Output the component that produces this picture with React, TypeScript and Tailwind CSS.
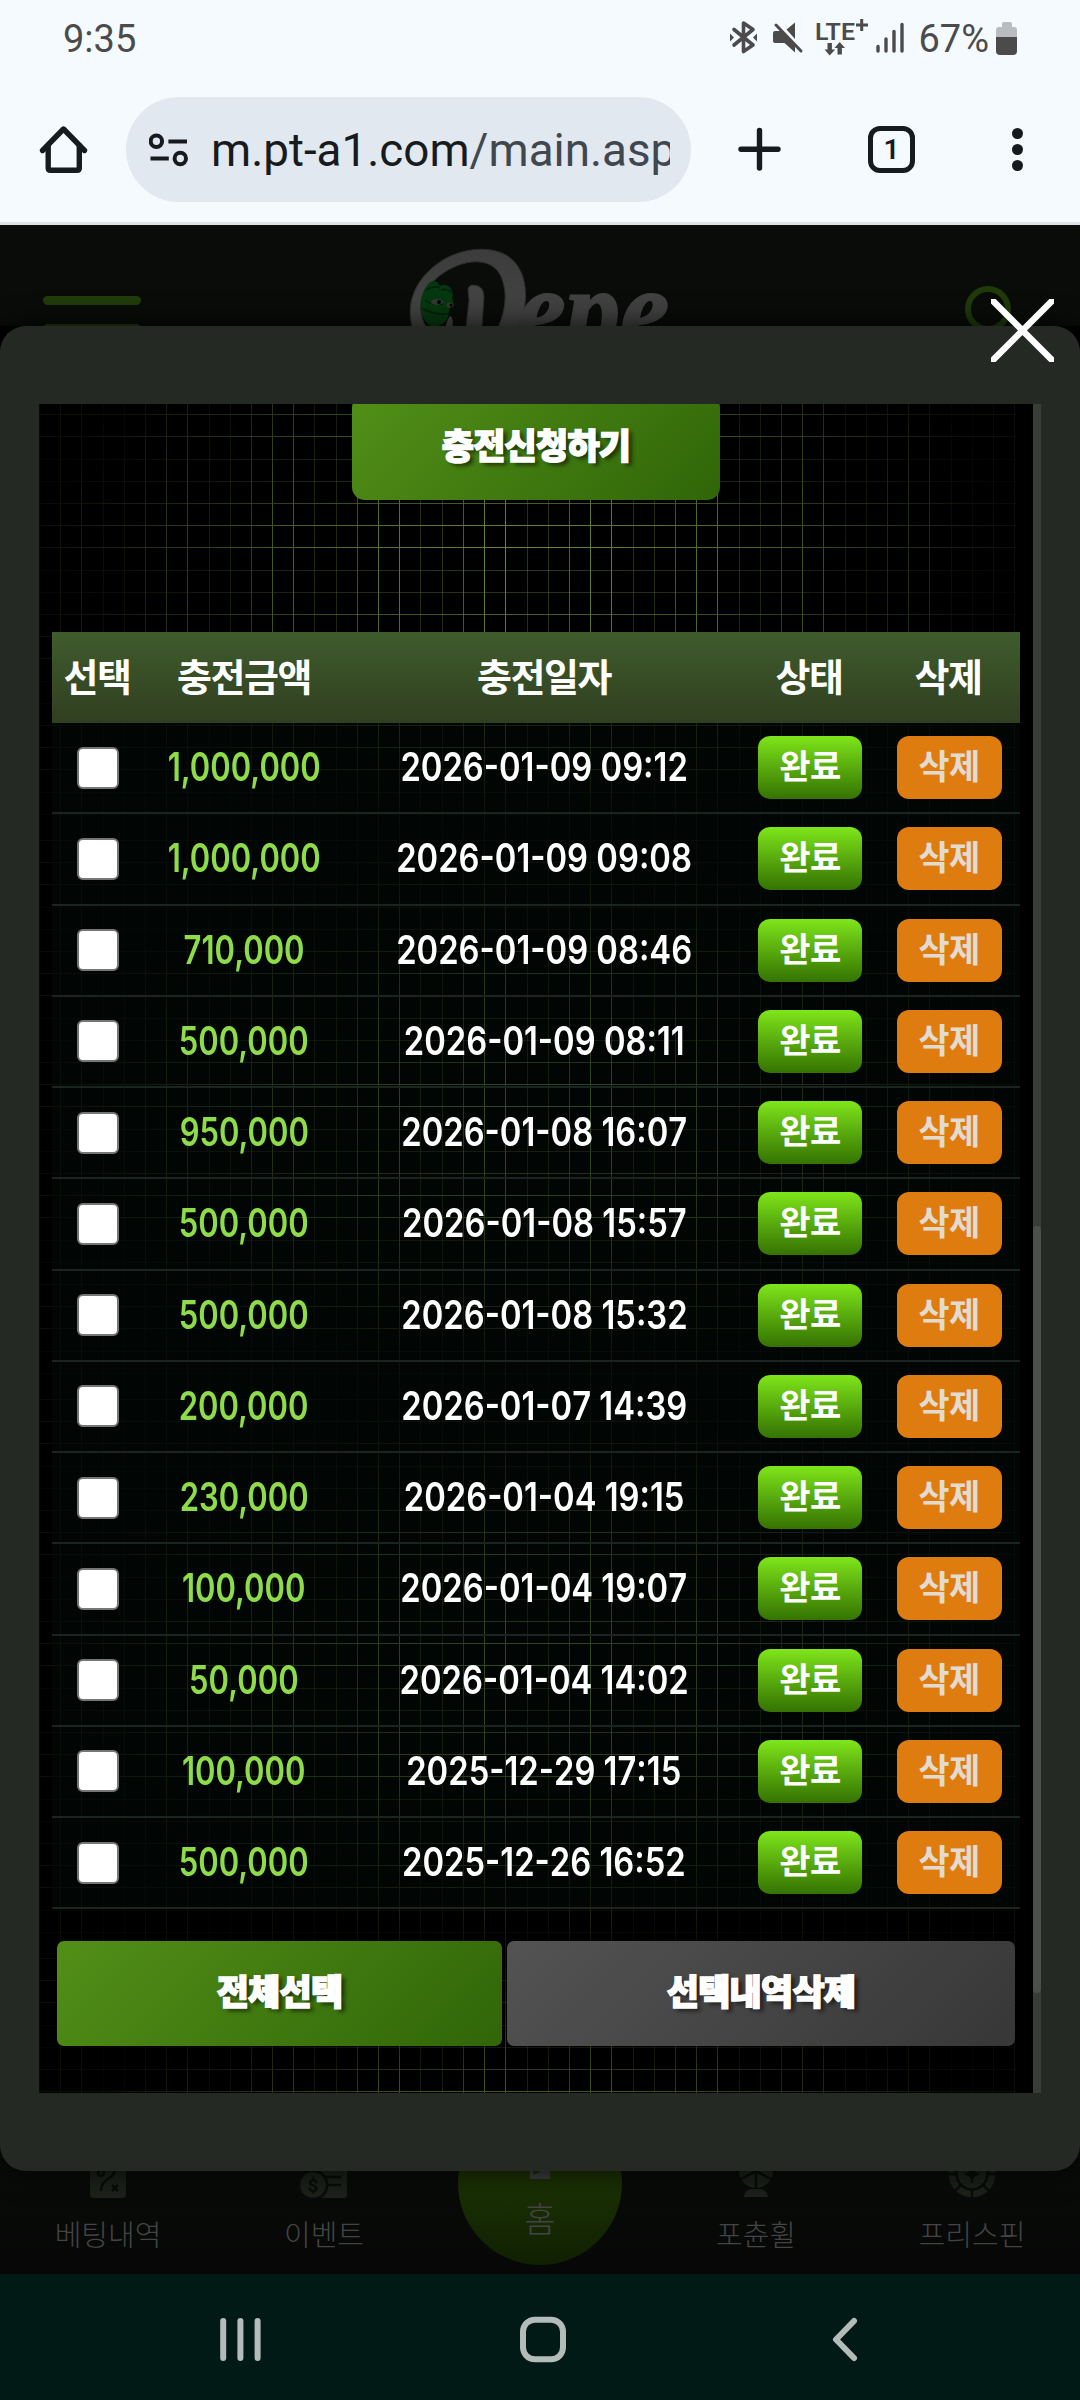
import type { ReactNode } from 'react'
import { clsx } from 'clsx'

interface Deposit {
  amount: string
  date: string
}

const deposits: Deposit[] = [
  { amount: '1,000,000', date: '2026-01-09 09:12' },
  { amount: '1,000,000', date: '2026-01-09 09:08' },
  { amount: '710,000', date: '2026-01-09 08:46' },
  { amount: '500,000', date: '2026-01-09 08:11' },
  { amount: '950,000', date: '2026-01-08 16:07' },
  { amount: '500,000', date: '2026-01-08 15:57' },
  { amount: '500,000', date: '2026-01-08 15:32' },
  { amount: '200,000', date: '2026-01-07 14:39' },
  { amount: '230,000', date: '2026-01-04 19:15' },
  { amount: '100,000', date: '2026-01-04 19:07' },
  { amount: '50,000', date: '2026-01-04 14:02' },
  { amount: '100,000', date: '2025-12-29 17:15' },
  { amount: '500,000', date: '2025-12-26 16:52' },
]

function StatusBar() {
  return (
    <div className="flex h-[74px] items-center justify-between pl-[63px] pr-[62px] pt-[3px] text-[38px] leading-none text-[#4b4b4b]">
      <span>9:35</span>
      <div className="flex items-center">
        <svg width="264" height="44" viewBox="728 17 264 44" className="-mr-[75px]" fill="none">
          {/* bluetooth */}
          <path d="M733 29.5 752 45 742.5 51.5V23L752 29.5 733 45" stroke="#4b4b4b" strokeWidth="3.6" strokeLinejoin="round" strokeLinecap="round" />
          <path d="m729 33.5 4 4-4 4zM756 33.5l-4 4 4 4z" fill="#4b4b4b" />
          {/* muted speaker */}
          <path d="M774 31h6l14 15v6.5l-10.5-9.5H774q-2 0-2-2v-8q0-2 2-2zM794 22.5V39l-8.5-9.5z" fill="#4b4b4b" />
          <path d="M775 25l25 26" stroke="#4b4b4b" strokeWidth="3" strokeLinecap="round" />
          {/* data arrows */}
          <path d="M826.5 43h4.4v6.5h3.3L828.7 55.5 823.5 49.5h3zM836.5 54.5h4.4V48h3.1L838.7 42 833.5 48h3z" fill="#4b4b4b" />
          {/* signal bars */}
          <path d="M877 46.5v4.5M885 39v12M893 31.5v19.5M901 24.5v26.5" stroke="#4b4b4b" strokeWidth="3.4" strokeLinecap="round" />
          <text x="814" y="40" fontSize="23" fontWeight="600" textLength="40" lengthAdjust="spacingAndGlyphs" fill="#4b4b4b">LTE</text>
          <path d="M860.7 19v12M855 25h12" stroke="#4b4b4b" strokeWidth="3" />
        </svg>
        <span className="mr-[7px]">67%</span>
        <svg width="22" height="34" viewBox="0 0 22 34">
          <path d="M6 2q0-2 2-2h6q2 0 2 2v3h2q3 0 3 3v7H0V8q0-3 3-3h3z" fill="#b9bcc0" />
          <path d="M0 15h21v14q0 4-4 4H4q-4 0-4-4z" fill="#4b4b4b" />
        </svg>
      </div>
    </div>
  )
}

function BrowserBar() {
  return (
    <div className="flex h-[151px] items-start border-b-[3px] border-[#dde3e8] pl-[38px] pt-[23px]">
      <svg width="52" height="105" viewBox="38 97 52 105" fill="none" stroke="#171b1e" strokeWidth="5.4" strokeLinecap="round" strokeLinejoin="round">
        <path d="M42.5 150.5 63.5 129l21 21.5" />
        <path d="M48.2 145.5v22.5q0 2.3 2.3 2.3h26.5q2.3 0 2.3-2.3v-22.5" />
      </svg>
      <div className="ml-9 flex h-[105px] w-[565px] items-center rounded-full bg-[#e2e8f0] pl-[23px] pr-[21px]">
        <svg width="40" height="34" viewBox="149 132.5 40 34" className="shrink-0" fill="none" stroke="#171b1e" strokeWidth="4">
          <circle cx="156.4" cy="140.8" r="5.7" />
          <path d="M168.4 141h18.6M150.5 158h18.3" />
          <circle cx="180.3" cy="158" r="5.7" />
        </svg>
        <div className="ml-[22px] flex-1 overflow-hidden whitespace-nowrap pt-[2px] text-[45.8px] leading-[60px] text-[#171b1e]">
          m.pt-a1.com<span className="text-[#40474e]">/main.asp</span>
        </div>
      </div>
      <svg width="48" height="105" viewBox="736 97 48 105" className="ml-[45px]" stroke="#171b1e" strokeWidth="5.4" strokeLinecap="round">
        <path d="M759.5 130.5v37.5M741 149.3h37" />
      </svg>
      <div className="ml-[84px] mt-[29px] flex h-[47px] w-[47px] items-center justify-center rounded-[12px] border-[5px] border-[#171b1e] text-[28px] font-semibold leading-none text-[#171b1e]">
        1
      </div>
      <div className="ml-[97px] mt-[31px] flex flex-col gap-[5px]">
        <i className="h-[11px] w-[11px] rounded-full bg-[#171b1e]" />
        <i className="h-[11px] w-[11px] rounded-full bg-[#171b1e]" />
        <i className="h-[11px] w-[11px] rounded-full bg-[#171b1e]" />
      </div>
    </div>
  )
}

function SiteLogo() {
  return (
    <svg width="280" height="101" viewBox="400 225 280 101" className="-ml-[29px]" role="img" aria-label="Pepe">
      <defs>
        <linearGradient id="chrome" x1="0" y1="0" x2="0" y2="1">
          <stop offset="0" stopColor="#3c3c3c" />
          <stop offset="1" stopColor="#464646" />
        </linearGradient>
      </defs>
      <path
        fillRule="evenodd"
        fill="url(#chrome)"
        stroke="#2c2c2c"
        d="M414 330C405 302 418 276 444 260 462 249 489 245 507 255 526 266 530 292 524 314L517 334H496C506 314 509 296 503 279 497 262 480 259 463 264 438 272 420 292 422 312 423 320 426 326 430 332z"
      />
      {/* frog face */}
      <path d="M422 312C420 300 424 289 431 282q6-3 10 4 7-3 11 3 3 4 1 9 3 5-1 9-3 3-2 7-1 6-6 10-8 4-14 1-6-5-8-13z" fill="#06380f" />
      <path d="M427 290q7-5 14-2M442 290q6-2 10 2M424 309q12 6 26 5M426 300q8 6 18 4" stroke="#03200a" strokeWidth="1.5" fill="none" />
      <ellipse cx="438" cy="302" rx="6" ry="3" fill="#343a34" />
      <ellipse cx="451" cy="305" rx="3.5" ry="2.5" fill="#343a34" />
      <circle cx="440" cy="302" r="2" fill="#000" />
      <circle cx="452" cy="305" r="1.5" fill="#000" />
      <path d="M446 330q1-9 5-14 4 1 2 14z" fill="#454545" />
      <path d="M469 290q0-5 6-5 10 1 10 12l-2 30h-16l3-27z" fill="#434343" stroke="#2c2c2c" />
      <text x="518" y="347" fontSize="112" fontWeight="700" fontStyle="italic" fontFamily="'Liberation Serif', serif" fill="#424242" stroke="#424242" strokeWidth="2" textLength="152" lengthAdjust="spacingAndGlyphs">
        epe
      </text>
    </svg>
  )
}

function SiteHeader() {
  return (
    <div className="flex h-[101px] items-start justify-between overflow-hidden bg-[#090c09] pl-[43px] pr-[69px]">
      <div className="mt-[71px] flex w-[98px] flex-col gap-[19px]">
        <span className="h-[9px] rounded-full bg-[#213c0a]" />
        <span className="h-[9px] rounded-full bg-[#213c0a]" />
      </div>
      <SiteLogo />
      <span className="mt-[61px] h-[46px] w-[46px] rounded-full border-[6px] border-[#203b0a]" />
    </div>
  )
}

const GRID_PITCH_X = 21.2
const GRID_PITCH_Y = 22.2
const GRID_TILE = 559

// the last two lines of every five are fainter
const strengths = [0.75, 1, 1, 0.4, 0.4]

function GridBackground() {
  return (
    <svg className="absolute inset-0" width="994" height="1689" viewBox="39 404 994 1689">
      <defs>
        <radialGradient id="fade">
          <stop offset="0" stopColor="#6a8a40" />
          <stop offset="0.45" stopColor="#4c6224" />
          <stop offset="0.8" stopColor="#222a12" />
          <stop offset="1" stopColor="#0d0e06" />
        </radialGradient>
        <mask id="lines" maskUnits="userSpaceOnUse" x="39" y="0" width="977" height="560">
          {Array.from({ length: 47 }, (_, i) => (
            <rect key={i} x={Math.round(38.9 + i * GRID_PITCH_X)} y="0" width="1" height="559" fill="#fff" opacity={strengths[i % 5]} />
          ))}
          {Array.from({ length: 25 }, (_, i) => (
            <rect key={i} x="39" y={Math.round(i * GRID_PITCH_Y)} width="977" height="1" fill="#fff" opacity={strengths[i % 5]} />
          ))}
        </mask>
      </defs>
      {[0, 1, 2, 3].map((tile) => (
        <g key={tile} transform={`translate(0 ${281 + tile * GRID_TILE})`}>
          <rect x="39" y="0" width="977" height="559" fill="url(#fade)" mask="url(#lines)" />
        </g>
      ))}
    </svg>
  )
}

function ActionButton({ className, children }: { className: string; children: ReactNode }) {
  return (
    <button
      className={clsx(
        'flex h-[105px] items-center justify-center text-[35px] font-black leading-none tracking-[-0.8px] text-white [-webkit-text-stroke:1.5px_#fff] [text-shadow:4px_3px_4px_rgba(0,0,0,0.6)]',
        className,
      )}
    >
      {children}
    </button>
  )
}

function DepositTable() {
  const columns = ['선택', '충전금액', '충전일자', '상태', '삭제']

  return (
    <div className="mt-[132px] w-[968px]">
      <div className="grid h-[91px] grid-cols-[90px_204px_396px_134px_144px] items-center bg-gradient-to-b from-[#3f5c2c] to-[#303f20] text-center text-[38px] font-bold leading-none tracking-[-1.4px] text-white">
        {columns.map((name) => (
          <span key={name}>{name}</span>
        ))}
      </div>
      {deposits.map((deposit) => (
        <div
          key={deposit.date}
          className="grid h-[91.25px] grid-cols-[90px_204px_396px_134px_144px] items-center justify-items-center border-b-2 border-[#1c2420] bg-[#020c09]/50"
        >
          <span className="ml-[2px] h-[42px] w-[42px] rounded-[6px] border-2 border-[#767676] bg-white" />
          <span className="mb-[2px] scale-x-[0.795] whitespace-nowrap font-[Inter] text-[39px] font-semibold leading-none text-[#8fdc4a]">
            {deposit.amount}
          </span>
          <span className="mb-[2px] scale-x-[0.84] whitespace-nowrap font-[Inter] text-[39px] font-semibold leading-none text-white [font-kerning:none]">
            {deposit.date}
          </span>
          <span className="ml-[2px] flex h-[63px] w-[104px] items-center justify-center rounded-[12px] bg-gradient-to-b from-[#7fe61a] to-[#357303] pb-px text-[34px] font-bold leading-none tracking-[-0.5px] text-white">
            완료
          </span>
          <button className="ml-[2px] flex h-[63px] w-[105px] items-center justify-center rounded-[12px] bg-[#df7c10] pb-px text-[34px] font-bold leading-none tracking-[-0.5px] text-[#e3dbd0]">
            삭제
          </button>
        </div>
      ))}
    </div>
  )
}

function DepositModal() {
  return (
    <div className="absolute inset-x-0 top-[101px] flex h-[1845px] rounded-[26px] bg-[#242a23] pl-[39px] pt-[78px] shadow-[0_0_30px_rgba(0,0,0,0.8)]">
      <div className="relative h-[1689px] w-[994px] overflow-hidden bg-black">
        <GridBackground />
        <div className="relative flex flex-col pl-[13px]">
          <ActionButton className="-mt-[9px] ml-[300px] w-[368px] rounded-[13px] bg-[linear-gradient(135deg,#528f18,#306608)]">
            충전신청하기
          </ActionButton>
          <DepositTable />
          <div className="mt-8 flex gap-[5px] pl-[5px]">
            <ActionButton className="w-[445px] rounded-[7px] bg-[linear-gradient(135deg,#528f18,#306608)]">전체선택</ActionButton>
            <ActionButton className="w-[508px] rounded-[7px] bg-[linear-gradient(135deg,#535353,#373737)]">선택내역삭제</ActionButton>
          </div>
        </div>
      </div>
      <div className="h-[1689px] w-2 bg-[#373e36] pt-[822px]">
        <div className="h-[767px] rounded-full bg-[#4a5148]" />
      </div>
      <svg className="absolute right-[26px] -top-[27px]" width="63" height="63" viewBox="0 0 63 63" stroke="#fff" strokeWidth="6.5">
        <path d="M0 0 63 63M63 0 0 63" />
      </svg>
    </div>
  )
}

function NavItem({ label, children }: { label: string; children: ReactNode }) {
  return (
    <div className="flex w-[216px] flex-col items-center">
      <svg width="60" height="60" viewBox="-30 -33 60 60" fill="#1c211a" stroke="none">
        {children}
      </svg>
      <span className="mt-[24px] text-[29px] font-light leading-none text-[#444]">{label}</span>
    </div>
  )
}

function BottomNav() {
  return (
    <div className="mt-auto flex h-[136px] items-start bg-gradient-to-b from-[#0a0d0a] to-[#060706]">
      <NavItem label="베팅내역">
        <rect x="-18" y="-20" width="36" height="47" rx="4" />
        <circle cx="-7" cy="2" r="3" fill="none" stroke="#090c09" strokeWidth="2.5" />
        <path d="M-7 20q0-8 7-12t7-11M2-1l5-3 4 3M4 14l6 6M10 14l-6 6" fill="none" stroke="#090c09" strokeWidth="2.5" />
      </NavItem>
      <NavItem label="이벤트">
        <rect x="-16" y="-15" width="39" height="42" rx="3" />
        <circle cx="-11" cy="14" r="15.5" fill="#090c09" />
        <circle cx="-11" cy="14" r="12.8" />
        <path d="M2 6h15M4 14h13" stroke="#090c09" strokeWidth="2.5" />
        <text x="-11" y="21" fontSize="19" fontWeight="700" textAnchor="middle" fill="#090c09">$</text>
      </NavItem>
      <div className="flex w-[216px] justify-center">
        <div className="-mt-[37px] flex h-[164px] w-[164px] flex-col items-center rounded-full bg-gradient-to-b from-[#264406] to-[#102002] pt-[50px]">
          <svg width="20" height="28" viewBox="0 0 20 28">
            <path d="M0 0h20v28H0z" fill="#3e3e42" />
            <path d="M2 18h8v3l-6 3z" fill="#1b3003" />
          </svg>
          <span className="mt-[24px] text-[34px] font-light leading-none text-[#444]">홈</span>
        </div>
      </div>
      <NavItem label="포츈휠">
        <circle r="17" />
        <path d="M-12 26q1-8 8-8h8q7 0 8 8z" />
        <path d="M0-17V17M-15-8 15 8M-15 8 15-8" stroke="#090c09" strokeWidth="2.5" />
      </NavItem>
      <NavItem label="프리스핀">
        <circle cy="3" r="23.4" />
        <g fill="none" stroke="#090c09" strokeWidth="2.5">
          <circle cy="3" r="15.5" />
          <circle cy="3" r="3" />
          <path d="M-7 3H7M0-5V12M0 18v9M10 13l7 7M-10 13l-7 7M-24 3h8M16 3h8" />
        </g>
      </NavItem>
    </div>
  )
}

function SystemNav() {
  return (
    <svg width="1080" height="126" viewBox="0 2274 1080 126" className="bg-[#021a16]" fill="none" stroke="#b4bcba" strokeWidth="6" strokeLinecap="round" strokeLinejoin="round">
      <path d="M223.2 2321v37M240.4 2321v37M257.6 2321v37" />
      <rect x="523" y="2319.7" width="40" height="39.6" rx="12" />
      <path d="M854 2321 836 2339.5 854 2358" />
    </svg>
  )
}

export default function App() {
  return (
    <div className="flex h-[2400px] w-[1080px] flex-col overflow-hidden bg-[#f5faff] font-[Roboto,'Noto_Sans_CJK_KR',sans-serif]">
      <StatusBar />
      <BrowserBar />
      <div className="relative flex h-[2049px] flex-col bg-black">
        <SiteHeader />
        <BottomNav />
        <DepositModal />
      </div>
      <SystemNav />
    </div>
  )
}
